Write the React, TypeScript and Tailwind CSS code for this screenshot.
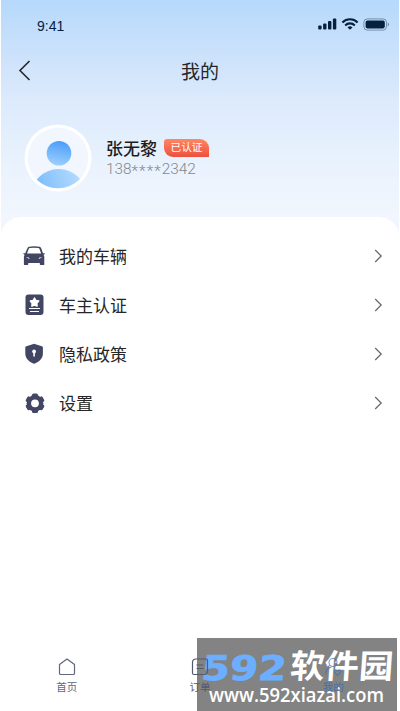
import type { ReactNode } from 'react'

const FONT = "font-['Noto_Sans_CJK_SC',sans-serif]"

function StatusBar() {
  return (
    <div className="flex h-[46px] items-center justify-between pt-[5px] pr-[9px] pl-[36px] text-[#06203f]">
      <span className="font-['Liberation_Sans',sans-serif] text-[14px] leading-none">9:41</span>
      <div className="flex items-center pb-[3px]">
        <svg width="20" height="12" viewBox="0 0 20 12" fill="currentColor">
          <rect x="0.2" y="7.6" width="3.4" height="4" rx="1" />
          <rect x="5.1" y="5.6" width="3.4" height="6" rx="1" />
          <rect x="10" y="3" width="3.4" height="8.6" rx="1" />
          <rect x="14.9" y="0.6" width="3.4" height="11" rx="1" />
        </svg>
        <svg className="ml-[3px]" width="18" height="12" viewBox="0 0 18 12" fill="none" stroke="currentColor" strokeWidth="2.1">
          <path d="M1.4 4.4a10.7 10.7 0 0 1 15.2 0" />
          <path d="M4.2 7.4a6.7 6.7 0 0 1 9.6 0" />
          <path d="M9 11.8 6.5 9.4a3.6 3.6 0 0 1 5 0Z" fill="currentColor" stroke="none" />
        </svg>
        <svg className="ml-[4px]" width="27" height="13" viewBox="0 0 27 13">
          <rect x="0.9" y="0.9" width="22.6" height="11.2" rx="3.4" fill="none" stroke="currentColor" strokeOpacity="0.4" />
          <rect x="2.6" y="2.6" width="19.2" height="7.8" rx="1.8" fill="currentColor" />
          <path d="M24.8 4.6v3.8c1.5-.6 1.5-3.2 0-3.8Z" fill="currentColor" fillOpacity="0.5" />
        </svg>
      </div>
    </div>
  )
}

function Header() {
  return (
    <div className="grid h-12 grid-cols-[60px_1fr_60px] items-center text-[#262626]">
      <svg className="ml-[17px]" width="13" height="21" viewBox="0 0 13 21" fill="none" stroke="currentColor" strokeWidth="1.6">
        <path d="M11.5 1 2 10.5 11.5 20" />
      </svg>
      <h1 className="text-center text-[19px] leading-none">我的</h1>
    </div>
  )
}

function Avatar() {
  return (
    <svg className="shrink-0" width="68" height="68" viewBox="0 0 68 68">
      <defs>
        <linearGradient id="head" x1="0.6" y1="0" x2="0.4" y2="1">
          <stop offset="0" stopColor="#4a9cfb" />
          <stop offset="1" stopColor="#9dd0fd" />
        </linearGradient>
        <linearGradient id="body" x1="0" y1="0.8" x2="1" y2="0.4">
          <stop offset="0" stopColor="#67b1fa" />
          <stop offset="1" stopColor="#b5dcfe" />
        </linearGradient>
        <clipPath id="disc">
          <circle cx="34" cy="34" r="30.3" />
        </clipPath>
      </defs>
      <circle cx="34" cy="34" r="33.5" fill="#fff" />
      <circle cx="34" cy="34" r="30.3" fill="#f2f6ff" />
      <circle cx="35" cy="29.2" r="12.3" fill="url(#head)" />
      <circle cx="34.7" cy="73.5" r="28.4" fill="url(#body)" clipPath="url(#disc)" />
    </svg>
  )
}

function Profile() {
  return (
    <div className="flex h-[123px] pt-[30px] pl-[23px]">
      <Avatar />
      <div className="ml-[14px] pt-[14px]">
        <div className="flex items-center">
          <span className="text-[17px] leading-[19px] font-medium text-[#1d1d1d]">张无黎</span>
          <span className="ml-[7px] flex h-[18px] w-[45px] items-center justify-center rounded-tl-[3px] rounded-tr-[9px] rounded-bl-[9px] bg-linear-to-b from-[#ff8763] to-[#ed4e3d] text-[10.7px] leading-none text-white">
            已认证
          </span>
        </div>
        <div className="mt-[4px] font-['Roboto',sans-serif] text-[15.3px] leading-[17px] font-light text-[#85878b]">
          138<span className="relative top-[2px] tracking-[1.1px]">****</span>2342
        </div>
      </div>
    </div>
  )
}

function CarIcon() {
  return (
    <svg width="24" height="22" viewBox="0 0 24 22" fill="#434663">
      <path
        fillRule="evenodd"
        d="M7 1.8Q12.3.6 17.6 1.8q1.1.2 1.6 1.5l1.9 5.2 1.3-.6q.7.5.2 1.2l-1 .8q.7.8.7 2v7.5q0 .7-.7.7h-3q-.8 0-.8-.8v-1.4H6.3v1.4q0 .8-.8.8H2.7q-.8 0-.8-.7v-7.5q0-1.2.7-2l-1-.8q-.5-.7.2-1.2l1.3.6L5.4 3.3Q5.9 2 7 1.8ZM5 8.5h14.2l-1.7-4.6q-.3-.8-1.1-.9-4.3-.7-8.6 0-.8.1-1.1.9ZM4 12.2l3.4 1.8q.5-1.900-3.400-1.800Zm16.200 0L16.800 14q-.5-1.900 3.400-1.800Z"
      />
    </svg>
  )
}

function CertIcon() {
  return (
    <svg width="24" height="22" viewBox="0 0 24 22">
      <rect x="3.5" y="0.5" width="18" height="20.4" rx="3" fill="#434663" />
      <path
        d="m12.500 4 1.400 2.500 2.800.6-1.900 2.100.3 2.900-2.600-1.100-2.600 1.100.3-2.900-1.900-2.100 2.800-.6Z"
        fill="#fff"
        stroke="#fff"
        strokeWidth="1.5"
        strokeLinejoin="round"
      />
      <path d="M7 14.5h11M8 17.5h9" stroke="#fff" strokeWidth="1.2" />
    </svg>
  )
}

function ShieldIcon() {
  return (
    <svg width="24" height="22" viewBox="0 0 24 22">
      <path
        d="M11.5.9q.6-.2 1.200 0l7.200 2.300q1 .3 1 1.300v6c0 5.300-4 8.300-8 10q-.8.3-1.600 0c-4-1.700-8-4.700-8-10v-6q0-1 1-1.300Z"
        fill="#434663"
      />
      <circle cx="12.1" cy="8.5" r="1.9" fill="#fff" />
      <path d="M12.1 9v4.500" stroke="#fff" strokeWidth="1.6" />
    </svg>
  )
}

function GearIcon() {
  return (
    <svg width="24" height="22" viewBox="0 0 24 22">
      <g fill="#434663" transform="translate(13 11.3)">
        <circle r="8.3" />
        <rect x="-3" y="-9.7" width="6" height="19.4" rx="1.6" />
        <rect x="-3" y="-9.7" width="6" height="19.4" rx="1.6" transform="rotate(60)" />
        <rect x="-3" y="-9.7" width="6" height="19.4" rx="1.6" transform="rotate(120)" />
        <circle r="3.9" fill="#fff" />
      </g>
    </svg>
  )
}

const menu: { label: string; icon: ReactNode }[] = [
  { label: '我的车辆', icon: <CarIcon /> },
  { label: '车主认证', icon: <CertIcon /> },
  { label: '隐私政策', icon: <ShieldIcon /> },
  { label: '设置', icon: <GearIcon /> },
]

function MenuList() {
  return (
    <ul className="flex-1 rounded-t-[20px] bg-white pt-[14px]">
      {menu.map(item => (
        <li key={item.label} className="flex h-[49px] items-center pr-[16px] pl-[21px]">
          {item.icon}
          <span className="ml-[13px] flex-1 text-[17px] leading-none text-[#262626]">{item.label}</span>
          <svg width="9" height="14" viewBox="0 0 9 14" fill="none" stroke="#666" strokeWidth="1.2">
            <path d="m1.2 1 6 6-6 6" />
          </svg>
        </li>
      ))}
    </ul>
  )
}

function TabBar() {
  return (
    <nav className="relative z-10 -mx-px grid h-[60px] grid-cols-3 pt-[7px] text-[10.5px] leading-none text-[#60677c]">
      <div className="flex flex-col items-center gap-[6px]">
        <svg width="18" height="18" viewBox="0 0 18 18" fill="none" stroke="currentColor" strokeWidth="1.2" strokeLinejoin="round">
          <path d="M1.500 6.600 9 1l7.500 5.600v8.600q0 1.300-1.300 1.300H2.800q-1.300 0-1.300-1.300Z" />
        </svg>
        <span>首页</span>
      </div>
      <div className="flex flex-col items-center gap-[6px] text-[#535a6d]">
        <svg width="18" height="18" viewBox="0 0 18 18" fill="none" stroke="currentColor" strokeWidth="1.2">
          <path d="M5 1h10q1.500 0 1.500 1.500V13q0 3.500-3.500 3.500H3q-1.500 0-1.500-1.500V4.500Q1.500 1 5 1Z" />
          <path d="M5.500 7h7M5.500 10.500h7" />
        </svg>
        <span>订单</span>
      </div>
      <div className="flex flex-col items-center gap-[6px] text-[#3f72ad]">
        <svg width="18" height="18" viewBox="0 0 18 18" fill="none" stroke="currentColor" strokeOpacity="0.7" strokeWidth="1.1">
          <circle cx="9" cy="4.500" r="4" />
          <path d="M1.500 16.500q0-6 6-7.500" />
          <path d="m13.500 17.500-3-3q-1-2.600 1.500-2.600l1.500 1 1.500-1q2.500 0 1.500 2.600Z" />
        </svg>
        <span>我的</span>
      </div>
    </nav>
  )
}

function Watermark() {
  return (
    <div className="absolute right-[3px] bottom-0 h-[73px] w-[200px] bg-[#838383] whitespace-nowrap">
      <svg width="200" height="73" viewBox="0 0 200 73">
        <text
          transform="translate(3.5 41.5) skewX(-6)"
          textLength="85"
          lengthAdjust="spacingAndGlyphs"
          className="font-['DejaVu_Sans',sans-serif] text-[34px] font-bold"
          fill="#6caeff"
          stroke="#6caeff"
          strokeWidth="0.8"
        >
          592
        </text>
        <text
          transform="translate(92.5 39.5) skewX(-4)"
          textLength="103"
          lengthAdjust="spacingAndGlyphs"
          className="font-['Noto_Sans_CJK_SC',sans-serif] text-[33px] font-bold"
          fill="#fff"
        >
          软件园
        </text>
        <text
          x="12"
          y="64"
          textLength="175"
          lengthAdjust="spacingAndGlyphs"
          className="font-['Open_Sans',sans-serif] text-[20px] font-semibold"
          fill="#fff"
        >
          www.592xiazai.com
        </text>
      </svg>
    </div>
  )
}

export default function App() {
  return (
    <div className={`relative flex h-[711px] w-[400px] flex-col overflow-hidden bg-white px-px ${FONT}`}>
      <div className="flex flex-1 flex-col bg-[linear-gradient(180deg,#b6d9fb_0px,#cae1fb_50px,#dceafc_100px,#e8f2fd_160px,#f2f6fe_216px)]">
        <StatusBar />
        <Header />
        <Profile />
        <MenuList />
      </div>
      <TabBar />
      <Watermark />
    </div>
  )
}
